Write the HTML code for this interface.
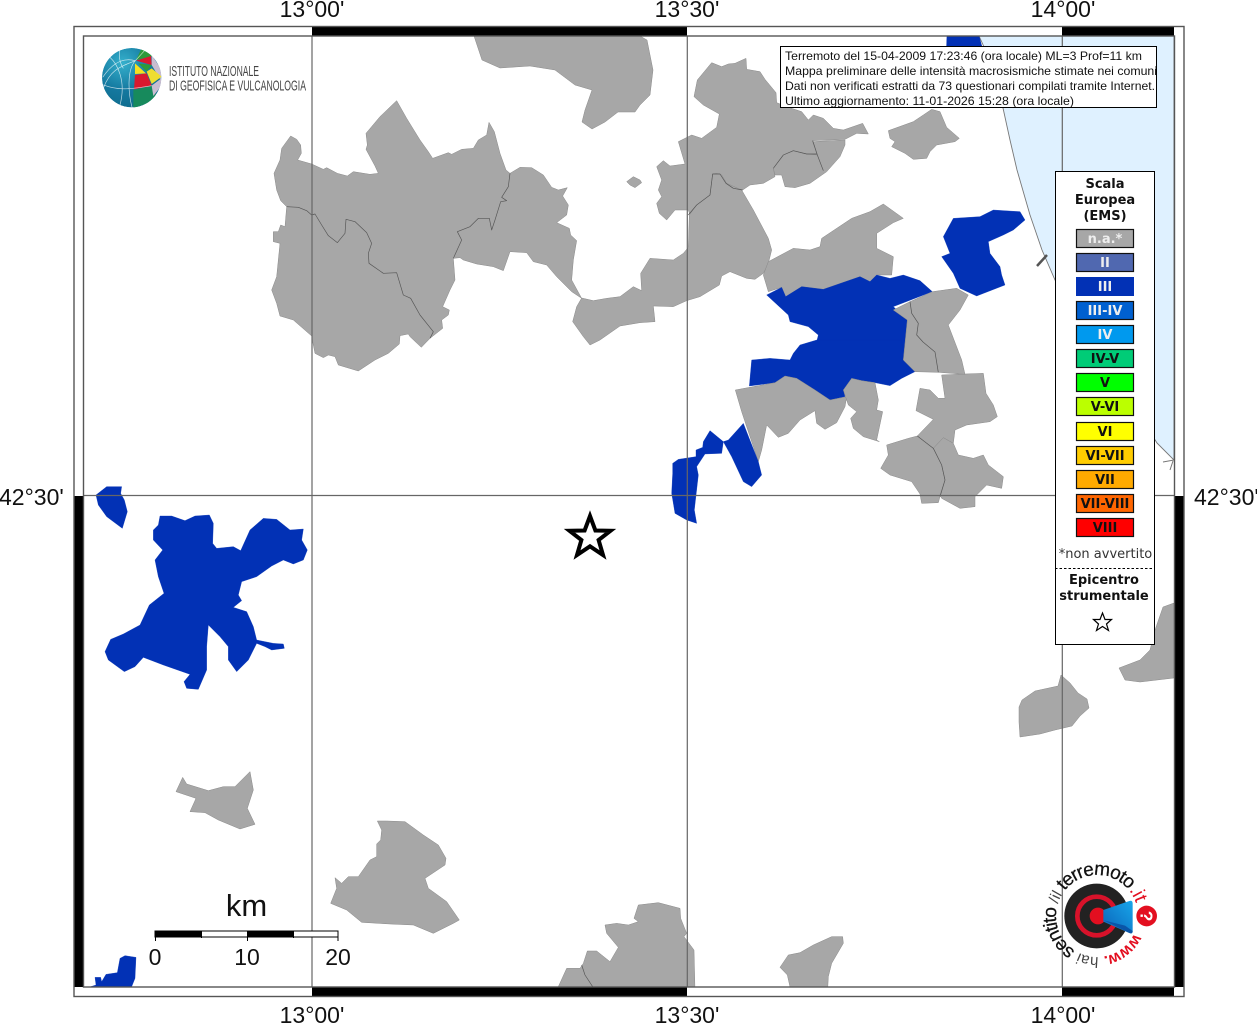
<!DOCTYPE html>
<html><head><meta charset="utf-8"><style>
html,body{margin:0;padding:0;background:#fff;width:1257px;height:1024px;overflow:hidden}
svg{position:absolute;left:0;top:0;display:block}
text{font-family:"Liberation Sans",sans-serif}
.g{fill:#a7a7a7;stroke:#8a8a8a}
.b{fill:#0231b5;stroke:#0231b5}
.l{fill:none;stroke:#555}
.tick{font-size:23px;fill:#111}
.lg{font-family:"DejaVu Sans",sans-serif;font-weight:bold;font-size:13px;text-anchor:middle}
.sw{stroke:#111;stroke-width:1.2}
.info{font-size:12px;fill:#111}
</style></head><body>
<svg width="1257" height="1024" viewBox="0 0 1257 1024" xmlns="http://www.w3.org/2000/svg">
<defs>
<clipPath id="map"><rect x="84" y="36" width="1090" height="951"/></clipPath>
<clipPath id="info"><rect x="781" y="47" width="375" height="60"/></clipPath>
<clipPath id="globe"><circle cx="185" cy="173" r="89"/></clipPath>
<radialGradient id="gb" cx=".35" cy=".25" r=".85"><stop offset="0" stop-color="#35b0cc"/><stop offset=".55" stop-color="#14789f"/><stop offset="1" stop-color="#0f6a8a"/></radialGradient>
<linearGradient id="cone" x1="0" y1="1" x2="1" y2="0"><stop offset="0" stop-color="#0a62b8"/><stop offset="1" stop-color="#18a6ea"/></linearGradient>
<path id="ring" d="M1138 916A41 41 0 1 1 1056 916A41 41 0 1 1 1138 916"/>
</defs>
<g clip-path="url(#map)" stroke-linejoin="round">
<polygon points="979,36 1174,36 1174,460 1157,443 1130,400 1090,340 1055,280 1042,250 1030,215 1017,170 1010,140 1003,108 990,60" fill="#dff1ff" stroke="#777" stroke-width=".9"/>
<path d="M1037 266L1047 255" stroke="#555" stroke-width="2.5"/>
<path d="M1163 462L1174 460M1170 470L1173 461" stroke="#777" stroke-width="1" fill="none"/>
<polygon class="b" stroke-width=".5" points="947,36 979,36 982,47 983,60 946,60"/>

<g transform="translate(260,90) scale(.33333)" stroke-width="1.5">
<polygon class="g" points="92,138 110,148 122,165 124,190 113,210 155,222 190,238 200,233 232,250 262,258 280,245 330,253 355,250 345,228 318,178 322,165 318,130 360,80 410,32 440,85 480,150 505,185 518,205 565,188 575,193 605,178 640,175 655,150 680,135 687,97 703,125 720,190 738,240 750,250 780,232 815,233 850,255 875,292 895,300 922,293 908,318 925,345 920,375 890,398 928,415 932,435 950,452 940,510 935,570 965,625 935,605 890,560 860,525 820,515 800,488 750,485 730,542 700,530 650,522 610,510 600,503 580,505 585,570 570,600 548,650 568,660 565,675 545,690 548,715 510,745 484,772 450,740 445,732 420,737 418,762 385,790 345,810 295,843 235,825 225,800 205,795 190,803 165,790 158,755 155,738 100,690 60,678 50,640 35,600 50,560 60,460 40,455 40,425 55,425 62,405 75,410 80,350 62,332 50,300 42,250 60,210 65,175"/>
<polyline class="l" stroke-width="2" points="80,350 115,352 140,362 155,375 165,372 185,405 205,437 232,458 255,430 258,388 285,395 320,428 335,460 325,490 327,520 370,550 410,548 430,615 452,625 480,675 520,725 510,745"/>
<polyline class="l" stroke-width="2" points="750,250 745,290 725,322 740,332 722,335 705,390 695,420 688,385 655,385 630,410 592,425 605,450 580,505"/>
</g>

<polygon class="g" stroke-width=".5" points="474,36 482,60 500,68 530,66 555,70 575,85 592,90 585,110 582,122 592,129 605,122 618,112 635,112 640,105 650,95 653,70 647,40 640,36"/>

<g transform="translate(620,40) scale(.33333)" stroke-width="1.5">
<polygon class="g" points="275,68 305,80 325,72 345,70 378,55 380,88 420,95 435,118 468,158 470,188 500,200 545,215 565,240 580,225 610,235 640,265 670,270 728,250 745,282 710,280 675,298 578,302 592,345 560,342 520,332 490,345 460,385 465,410 430,430 390,435 368,450 340,445 318,430 300,402 278,402 270,465 230,495 210,525 205,510 165,510 140,540 118,520 110,490 125,470 115,450 125,420 110,380 130,362 150,378 195,372 175,305 215,285 245,295 290,262 298,222 250,195 222,170 232,120"/>
<polygon class="g" points="490,345 460,385 465,405 485,405 495,440 525,443 570,430 620,395 660,350 675,315 675,300 578,305 592,345 560,342 520,332"/>
<polygon class="g" points="-115,774 -80,782 -40,775 0,770 40,740 65,752 62,700 90,655 160,660 190,640 205,622 208,525 230,495 270,465 278,402 290,400 305,405 320,430 365,450 400,510 445,595 455,630 445,670 430,700 405,718 380,715 330,695 305,708 298,735 240,770 200,782 160,800 100,798 105,845 60,848 0,858 -60,900 -90,915 -110,890 -142,845 -130,800"/>
<polyline class="l" stroke-width="2" points="205,525 230,495 270,465 278,402 300,402 318,430 340,445 368,450"/>
<polyline class="l" stroke-width="2" points="578,302 592,345 610,392"/>
<polyline class="l" stroke-width="2" points="460,385 490,345 520,332 560,342 590,342"/>
<polygon class="g" points="20,425 40,410 60,420 65,428 45,443 30,435"/>
<polygon class="g" points="805,272 880,245 910,225 935,208 960,215 980,262 1018,295 1005,305 950,315 930,335 920,355 880,358 855,340 815,320 825,305 810,295"/>
<polygon class="g" points="430,705 445,665 520,625 570,630 600,620 605,595 695,535 750,515 790,492 850,535 820,548 770,580 770,625 820,650 815,705 770,705 750,725 720,710 610,748 545,740 497,770 485,742 445,755"/>
<polygon class="b" stroke-width="1" points="440,765 485,742 497,770 545,740 610,748 720,710 750,725 770,705 810,715 850,705 900,722 937,755 820,800 862,840 855,960 520,960 590,905 595,885 565,860 510,845 505,825"/>
<polygon class="b" stroke-width="1" points="970,590 1000,535 1080,530 1120,510 1200,515 1215,540 1180,570 1150,585 1105,605 1110,640 1140,680 1145,705 1155,735 1070,768 1020,745 1000,700 965,650 990,640"/>
</g>

<g transform="translate(660,340) scale(.33333)" stroke-width="1.5">
<polygon class="b" stroke-width="1" points="470,0 725,0 730,60 765,95 725,115 690,137 645,128 605,122 575,115 550,150 555,170 510,180 465,150 410,115 375,108 345,128 268,138 275,60 330,55 390,60 400,40 420,15"/>
<polygon class="g" points="226,150 345,128 375,108 410,115 465,150 510,180 560,170 555,200 530,248 495,268 470,250 465,212 420,240 385,280 355,292 320,255 305,330 295,365 255,245 245,215"/>
<polygon class="g" points="550,150 575,115 605,122 645,128 655,180 650,210 668,215 650,300 658,305 610,290 580,265 572,235 590,215 565,195"/>
<polygon class="b" stroke-width="1" points="250,250 295,365 305,405 275,440 250,425 215,350 190,305 205,300"/>
<polygon class="b" stroke-width="1" points="190,305 150,272 130,305 128,322 108,330 108,350 55,358 38,370 38,400 35,460 45,520 80,540 110,550 103,510 115,405 110,380 135,342 185,340"/>
<polygon class="g" points="845,105 915,102 970,100 978,160 1000,195 1012,230 990,245 920,255 885,270 880,310 850,293 820,325 772,288 820,238 768,212 780,145 810,150 835,175 855,175 850,140"/>
<polygon class="g" points="680,315 745,295 772,288 820,325 845,375 855,420 840,470 835,488 785,490 780,462 755,425 690,405 662,385 685,345"/>
<polygon class="g" points="820,325 850,293 880,310 895,345 940,355 970,345 985,375 1030,410 1025,445 980,435 945,470 945,500 900,505 845,475 840,465 855,420 845,375"/>
<polyline class="l" stroke-width="2" points="772,288 820,325 845,375 855,420 840,470"/>
</g>

<polygon class="g" stroke-width=".5" points="893.300,310 910,301.700 932.300,291.700 956.700,288.300 968.300,295 960,310 948.300,325 961.700,360 965,374.300 938.300,372.300 915,371.700 903.300,360 907.300,320"/>
<polyline class="l" stroke-width=".7" points="910,301.700 911.700,313.300 918.300,323.300 916.700,335 923,342 935,352 938.300,372.300"/>

<g transform="translate(90,480) scale(.33333)" stroke-width="1">
<polygon class="b" points="18,45 50,20 95,20 92,40 103,60 112,95 97,145 50,110 25,75"/>
<polygon class="b" points="210,108 245,108 285,122 315,108 358,105 370,130 368,190 380,205 430,200 452,212 480,150 520,115 560,118 600,150 640,147 635,180 652,210 640,240 610,252 580,240 545,258 500,290 455,305 445,345 455,362 430,382 470,395 490,440 500,480 550,490 580,492 583,505 545,510 525,500 500,490 475,540 440,575 415,540 415,500 390,470 355,435 350,500 350,570 325,628 290,625 282,605 300,583 220,555 160,532 135,560 103,575 55,540 45,515 62,478 100,462 150,435 178,375 222,340 205,290 195,240 218,210 190,180 190,150 205,135"/>
</g>

<g transform="translate(60,880) scale(.33333)" stroke-width="1">
<polygon class="b" points="92,320 108,315 105,292 122,292 125,305 138,283 172,278 180,235 195,227 228,232 225,295 215,320"/>
</g>

<g transform="translate(160,760) scale(.33333)" stroke-width="1.5">
<polygon class="g" points="48,95 68,52 80,72 145,92 190,80 225,80 270,35 280,90 262,145 285,193 240,207 175,180 135,158 90,155 108,115"/>
<polygon class="g" points="652,183 680,183 735,185 790,225 835,255 858,295 855,315 795,355 805,385 860,425 898,480 880,490 820,520 760,495 690,492 605,487 560,450 512,430 530,385 525,353 545,370 565,350 595,350 630,300 650,290 650,252 662,240 665,210"/>
</g>

<g transform="translate(550,890) scale(.33333)" stroke-width="1.5">
<polygon class="g" points="25,290 50,235 90,235 100,220 112,183 140,183 180,215 205,172 170,130 165,105 200,100 235,105 265,95 252,85 265,45 325,38 390,55 392,85 410,130 402,140 432,180 435,300 20,300"/>
<polyline class="l" stroke-width="2" points="95,225 105,255 128,290"/>
<polygon class="g" points="690,232 715,195 750,188 790,165 845,140 878,140 880,160 845,220 835,260 833,300 722,300 712,255"/>
</g>

<polygon class="g" stroke-width=".5" points="1019,707 1022,700 1035,691 1058,686 1061,675 1070,683 1078,693 1087,699 1089,708 1080,716 1072,726 1055,730 1040,734 1020,737 1019,722"/>
<polygon class="g" stroke-width=".5" points="1119,668 1140,660 1150,650 1155,630 1163,607 1174,603 1174,678 1140,682 1125,680"/>
</g>

<g stroke="#666" stroke-width="1.2" fill="none">
<path d="M312 36V987M687.300 36V987M1062.300 36V987M84 495.500H1174"/>
</g>

<g fill="#000" shape-rendering="crispEdges">
<rect x="312" y="26" width="375" height="10"/>
<rect x="1062" y="26" width="112" height="10"/>
<rect x="312" y="987" width="375" height="10"/>
<rect x="1062" y="987" width="112" height="10"/>
<rect x="74" y="496" width="10" height="491"/>
<rect x="1174" y="496" width="10" height="491"/>
</g>
<g fill="none" stroke="#555" stroke-width="1.4">
<rect x="74" y="26.500" width="1110" height="970"/>
<rect x="83.500" y="36" width="1091" height="951"/>
</g>

<text class="tick" x="312" y="17" text-anchor="middle">13°00'</text>
<text class="tick" x="687" y="17" text-anchor="middle">13°30'</text>
<text class="tick" x="1063" y="17" text-anchor="middle">14°00'</text>
<text class="tick" x="312" y="1023" text-anchor="middle">13°00'</text>
<text class="tick" x="687" y="1023" text-anchor="middle">13°30'</text>
<text class="tick" x="1063" y="1023" text-anchor="middle">14°00'</text>
<text class="tick" x="-1" y="505">42°30'</text>
<text class="tick" x="1194" y="505">42°30'</text>

<!-- main star -->
<polygon points="590,516 595.400,530.500 610.500,530.800 598.600,540 603,555 590,546.300 577,555 581.400,540 569.500,530.800 584.600,530.500" fill="#fff" stroke="#000" stroke-width="4" stroke-linejoin="miter"/>

<!-- INGV logo -->
<g transform="translate(70,20) scale(.33333)">
<g clip-path="url(#globe)">
<circle cx="185" cy="173" r="89" fill="url(#gb)"/>
<polygon points="190,210 255,195 258,240 190,265" fill="#178a5c"/>
<polygon points="198,120 215,85 245,100 245,110" fill="#2d9a3a"/>
<polygon points="198,122 243,108 245,135" fill="#d8192f"/>
<polygon points="245,105 275,150 272,180 245,135" fill="#c9bdd0"/>
<polygon points="195,130 228,160 195,162" fill="#f5e020"/>
<polygon points="205,130 245,135 230,155" fill="#2d9a3a"/>
<polygon points="230,155 245,145 275,170 245,192" fill="#eedd30"/>
<polygon points="195,165 230,160 245,197 192,208" fill="#d8192f"/>
<polygon points="245,197 274,175 272,200 250,228" fill="#c9bdd0"/>
<g fill="none" stroke="#fff" stroke-width="2" opacity=".75">
<path d="M196 122C170 150 175 220 186 262M196 122C150 110 120 140 98 172M196 122C150 140 120 150 100 205M196 122L230 85M120 112C140 130 170 180 150 255M150 85C145 110 150 130 160 145M100 195C140 210 170 210 245 197"/>
</g>
</g>
</g>
<g fill="#444" font-size="15">
<text x="169" y="76" textLength="90" lengthAdjust="spacingAndGlyphs">ISTITUTO NAZIONALE</text>
<text x="169" y="90.500" textLength="137" lengthAdjust="spacingAndGlyphs">DI GEOFISICA E VULCANOLOGIA</text>
</g>

<!-- info box -->
<rect x="780.500" y="46.500" width="376" height="61" fill="#fff" stroke="#000" stroke-width="1"/>
<g clip-path="url(#info)" class="info">
<text x="785" y="60" textLength="357" lengthAdjust="spacingAndGlyphs">Terremoto del 15-04-2009 17:23:46 (ora locale) ML=3 Prof=11 km</text>
<text x="785" y="75" textLength="372" lengthAdjust="spacingAndGlyphs">Mappa preliminare delle intensità macrosismiche stimate nei comuni</text>
<text x="785" y="90" textLength="370" lengthAdjust="spacingAndGlyphs">Dati non verificati estratti da 73 questionari compilati tramite Internet.</text>
<text x="785" y="105" textLength="289" lengthAdjust="spacingAndGlyphs">Ultimo aggiornamento: 11-01-2026 15:28 (ora locale)</text>
</g>

<!-- legend -->
<rect x="1055.500" y="171.500" width="99" height="473" fill="#fff" stroke="#000" stroke-width="1"/>
<g class="lg" fill="#111">
<text x="1105" y="188" class="lg">Scala</text>
<text x="1105" y="204" class="lg">Europea</text>
<text x="1105" y="220" class="lg">(EMS)</text>
</g>
<g>
<rect class="sw" x="1076.500" y="229.500" width="57" height="18" fill="#a7a7a7"/>
<rect class="sw" x="1076.500" y="253.500" width="57" height="18" fill="#5068b0"/>
<rect x="1076" y="277" width="58" height="19" fill="#0231b5"/>
<rect class="sw" x="1076.500" y="301.500" width="57" height="18" fill="#0060d0"/>
<rect class="sw" x="1076.500" y="325.500" width="57" height="18" fill="#0099ee"/>
<rect class="sw" x="1076.500" y="349.500" width="57" height="18" fill="#00cc77"/>
<rect class="sw" x="1076.500" y="373.500" width="57" height="18" fill="#00ff00"/>
<rect class="sw" x="1076.500" y="397.500" width="57" height="18" fill="#bbff00"/>
<rect class="sw" x="1076.500" y="422.500" width="57" height="18" fill="#ffff00"/>
<rect class="sw" x="1076.500" y="446.500" width="57" height="18" fill="#ffcc00"/>
<rect class="sw" x="1076.500" y="470.500" width="57" height="18" fill="#ffaa00"/>
<rect class="sw" x="1076.500" y="494.500" width="57" height="18" fill="#ff6600"/>
<rect class="sw" x="1076.500" y="518.500" width="57" height="18" fill="#ff0000"/>
</g>
<g>
<text class="lg" x="1105" y="243" fill="#eee">n.a.*</text>
<text class="lg" x="1105" y="267" fill="#eee">II</text>
<text class="lg" x="1105" y="291" fill="#eee">III</text>
<text class="lg" x="1105" y="315" fill="#eee">III-IV</text>
<text class="lg" x="1105" y="339" fill="#eee">IV</text>
<text class="lg" x="1105" y="363" fill="#111">IV-V</text>
<text class="lg" x="1105" y="387" fill="#111">V</text>
<text class="lg" x="1105" y="411" fill="#111">V-VI</text>
<text class="lg" x="1105" y="436" fill="#111">VI</text>
<text class="lg" x="1105" y="460" fill="#111">VI-VII</text>
<text class="lg" x="1105" y="484" fill="#111">VII</text>
<text class="lg" x="1105" y="508" fill="#111">VII-VIII</text>
<text class="lg" x="1105" y="532" fill="#111">VIII</text>
</g>
<text x="1105.500" y="558" text-anchor="middle" style="font-family:'DejaVu Sans',sans-serif;font-size:13px" fill="#333">*non avvertito</text>
<line x1="1055" y1="568.500" x2="1153" y2="568.500" stroke="#000" stroke-width="1" stroke-dasharray="2.500 2"/>
<text class="lg" x="1104" y="584" fill="#111">Epicentro</text>
<text class="lg" x="1104" y="600" fill="#111">strumentale</text>
<polygon points="1102.500,613 1105,619.500 1111.500,619.500 1106.500,624 1108.500,630.500 1102.500,626.500 1096.500,630.500 1098.500,624 1093.500,619.500 1100,619.500" fill="#fff" stroke="#000" stroke-width="1.200"/>

<!-- scale bar -->
<text x="246.500" y="916" text-anchor="middle" font-size="31" fill="#111">km</text>
<g shape-rendering="crispEdges">
<rect x="155" y="931" width="183" height="6" fill="#fff" stroke="#000" stroke-width="1"/>
<rect x="155" y="931" width="46" height="6" fill="#000"/>
<rect x="247" y="931" width="46" height="6" fill="#000"/>
<path d="M155.500 931V941M201.500 931V938M247.500 931V941M293.500 931V938M338 931V941" stroke="#000" fill="none"/>
</g>
<text class="tick" x="155" y="965" text-anchor="middle">0</text>
<text class="tick" x="247" y="965" text-anchor="middle">10</text>
<text class="tick" x="338" y="965" text-anchor="middle">20</text>

<!-- haisentito logo -->
<g transform="translate(1030,855) scale(.33333)">
<circle cx="200" cy="183" r="97" fill="#222"/>
<circle cx="200" cy="183" r="58" fill="none" stroke="#d8122a" stroke-width="14"/>
<circle cx="204" cy="183" r="25" fill="#e30f20"/>
<path d="M220 165L298 138Q308 135 308 146V228Q308 238 298 234L220 200Z" fill="url(#cone)"/>
<path d="M222 196L285 212L308 228Q308 238 298 234Z" fill="#0a55a8"/>
<circle cx="350" cy="183" r="31" fill="#e30f20"/>
<text transform="translate(350,183) rotate(90)" text-anchor="middle" y="18" font-size="52" font-weight="bold" fill="#fff">?</text>
</g>
<g fill="#111">
<text fill="#e30f20" font-weight="bold" font-size="16"><textPath href="#ring" startOffset="7%" letter-spacing="-.4">www.</textPath></text>
<text fill="#444" font-size="15"><textPath href="#ring" startOffset="24.400%">hai</textPath></text>
<text font-size="19" stroke="#111" stroke-width=".25"><textPath href="#ring" startOffset="33.900%" letter-spacing="-1">sentito</textPath></text>
<text fill="#444" font-size="15"><textPath href="#ring" startOffset="54.700%">/il</textPath></text>
<text font-size="19" stroke="#111" stroke-width=".25"><textPath href="#ring" startOffset="60.500%" letter-spacing="-1">terremoto</textPath></text>
<text fill="#e30f20" font-size="19"><textPath href="#ring" startOffset="89.200%">.it</textPath></text>
</g>
</svg>
</body></html>
